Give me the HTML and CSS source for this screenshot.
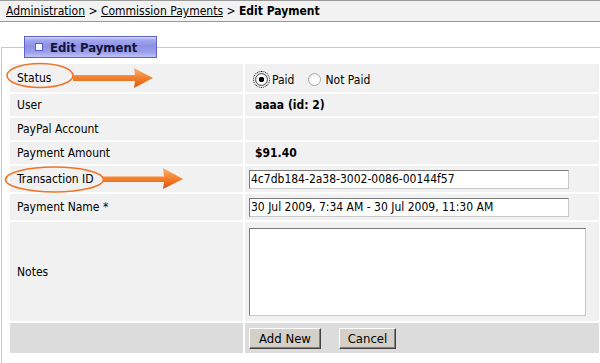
FILE: index.html
```html
<!DOCTYPE html>
<html lang="en">
<head>
    <meta charset="UTF-8">
    <title>Edit Payment</title>
    <link rel="stylesheet" href="styles.css">
</head>
<body>
<!-- Breadcrumbs -->
<div class="crumbs">
    <a href="#">Administration</a> &gt; <a href="#">Commission Payments</a> &gt; <b>Edit Payment</b>
</div>

<fieldset class="panel">
    <legend class="panel-title"><span class="title-icon"></span>Edit Payment</legend>

    <div class="form-grid">
        <!-- Status -->
        <div class="label">
            Status
            <svg class="callout" width="160" height="30" viewBox="0 0 160 30">
                <defs>
                    <linearGradient id="arrowFill1" x1="0" y1="0" x2="0" y2="1">
                        <stop offset="0" stop-color="#fbb274"/>
                        <stop offset="0.5" stop-color="#f3802c"/>
                        <stop offset="1" stop-color="#d9570c"/>
                    </linearGradient>
                </defs>
                <ellipse cx="30" cy="11.5" rx="33" ry="12" fill="none" stroke="#f07426" stroke-width="1.6"/>
                <path d="M63 11 L125 11 L124 4 L143 14 L124 24 L125 17 L63 17 Z" fill="url(#arrowFill1)"/>
            </svg>
        </div>
        <div class="value">
            <label class="radio"><input type="radio" name="status" class="radio-input focused" checked> Paid</label>
            <label class="radio"><input type="radio" name="status" class="radio-input"> Not Paid</label>
        </div>

        <div class="label">User</div>
        <div class="value"><span class="text strong">aaaa (id: 2)</span></div>

        <div class="label">PayPal Account</div>
        <div class="value"></div>

        <div class="label">Payment Amount</div>
        <div class="value"><span class="text strong">$91.40</span></div>

        <!-- Transaction ID -->
        <div class="label">
            Transaction ID
            <svg class="callout" width="190" height="30" viewBox="0 0 190 30">
                <defs>
                    <linearGradient id="arrowFill2" x1="0" y1="0" x2="0" y2="1">
                        <stop offset="0" stop-color="#fbb274"/>
                        <stop offset="0.5" stop-color="#f3802c"/>
                        <stop offset="1" stop-color="#d9570c"/>
                    </linearGradient>
                </defs>
                <ellipse cx="44.5" cy="13.5" rx="49" ry="12.5" fill="none" stroke="#f07426" stroke-width="1.6"/>
                <path d="M93 10.5 L154 10.5 L153 2 L173 13 L153 23 L154 16 L93 16 Z" fill="url(#arrowFill2)"/>
            </svg>
        </div>
        <div class="value"><input type="text" class="field" value="4c7db184-2a38-3002-0086-00144f57"></div>

        <div class="label">Payment Name *</div>
        <div class="value"><input type="text" class="field" value="30 Jul 2009, 7:34 AM - 30 Jul 2009, 11:30 AM"></div>

        <div class="label">Notes</div>
        <div class="value top"><textarea class="notes"></textarea></div>

        <div class="label dark"></div>
        <div class="value dark">
            <button class="btn btn-add">Add New</button>
            <button class="btn btn-cancel">Cancel</button>
        </div>
    </div>
</fieldset>
</body>
</html>
```

FILE: styles.css
```css
* {
    box-sizing: border-box;
}

body {
    margin: 0;
    overflow: hidden;
    font-family: "DejaVu Sans Condensed", "DejaVu Sans", sans-serif;
    font-stretch: condensed;
    font-size: 12px;
    color: #000;
    background: #fff;
}

/* Breadcrumbs */
.crumbs {
    height: 22px;
    padding: 0 6px;
    line-height: 20px;
    background: #f2f2f2;
    border-top: 1px solid #999;
    border-bottom: 1px solid #999;
    white-space: nowrap;
}

.crumbs a {
    color: #000;
}

/* Fieldset panel */
.panel {
    margin: 14px -20px 0 1px;
    padding: 6px 20px 0 8px;
    border: 1px solid #c8c8c8;
    border-bottom: none;
    min-width: 0;
}

.panel-title {
    display: flex;
    align-items: center;
    width: 133px;
    height: 22px;
    margin-left: 14px;
    padding: 0 0 0 10px;
    border: 1px solid #5f63c9;
    background: linear-gradient(#d6d8fa 0, #a3a7ee 3px, #8d91e6 45%, #9a9eea 75%, #bfc2f5 100%);
    font-size: 13px;
    font-weight: bold;
    color: #14143a;
}

.title-icon {
    width: 8px;
    height: 8px;
    margin-right: 7px;
    border: 1px solid #5a5ec8;
    background: #f4f5ff;
}

/* Form rows */
.form-grid {
    display: grid;
    grid-template-columns: 233px 1fr;
    grid-template-rows: 28px 22px 22px 22px 26px 26px 99px 30px;
    gap: 2px;
    margin-bottom: 10px;
}

.label,
.value {
    display: flex;
    align-items: center;
    background: #f1f1f1;
}

.label {
    position: relative;
    padding-left: 7px;
}

.value {
    padding-left: 4px;
}

.value.top {
    align-items: flex-start;
    padding-top: 6px;
}

.dark {
    background: #dcdcdc;
}

.text {
    padding-left: 6px;
}

.strong {
    font-weight: bold;
}

/* Arrows and circles drawn over the labels */
.callout {
    position: absolute;
    left: 0;
    top: 0;
    overflow: visible;
    pointer-events: none;
}

/* Radios */
.radio {
    display: flex;
    align-items: center;
    margin-top: 3px;
    margin-right: 8px;
}

.radio-input {
    appearance: none;
    width: 13px;
    height: 13px;
    margin: 0 4px 0 6px;
    border: 1px solid #a8a8a8;
    border-radius: 50%;
    background: radial-gradient(circle at 60% 60%, #fff 40%, #dcdcdc 100%);
}

.radio-input:checked {
    border-color: #555;
    background: radial-gradient(circle, #000 0, #000 2.5px, #fff 3px, #fff 4px, #d0d0d0 6px);
}

.radio-input.focused {
    outline: 1px dotted #000;
    outline-offset: 1px;
}

/* Inputs */
.field {
    width: 320px;
    height: 19px;
    padding: 0 1px;
    border: 1px solid #c8c8c8;
    border-top-color: #7a7a7a;
    border-left-color: #7a7a7a;
    font: inherit;
    color: #000;
    background: #fff;
}

.notes {
    width: 337px;
    height: 88px;
    border: 1px solid #c8c8c8;
    border-top-color: #7a7a7a;
    border-left-color: #7a7a7a;
    resize: none;
    background: #fff;
}

/* Buttons */
.btn {
    height: 21px;
    padding: 0;
    border: 1px solid;
    border-color: #fff #404040 #404040 #fff;
    box-shadow: inset -1px -1px 0 #808080;
    background: #d4d0c8;
    font: inherit;
    font-size: 13px;
    color: #000;
}

.btn-add {
    width: 72px;
    margin-right: 18px;
}

.btn-cancel {
    width: 57px;
}
```
